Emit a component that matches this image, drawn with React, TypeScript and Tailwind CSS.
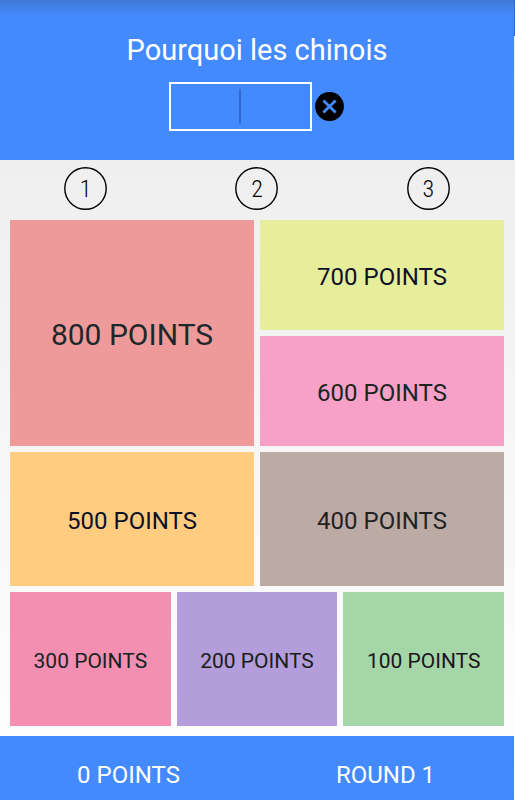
import React, { useState } from 'react';
import clsx from 'clsx';

interface Tile {
  points: number;
  className: string;
}

const tiles: Tile[] = [
  { points: 800, className: 'col-span-3 row-span-2 bg-[#ef9a9a] text-[30px] text-[#1c2829]' },
  { points: 700, className: 'col-span-3 bg-[#e6ee9c] text-2xl text-[#10102a]' },
  { points: 600, className: 'col-span-3 bg-[#f7a1c8] text-2xl text-[#1c2420]' },
  { points: 500, className: 'col-span-3 bg-[#ffcc80] text-2xl text-[#0a1028]' },
  { points: 400, className: 'col-span-3 bg-[#bcaaa4] text-2xl text-[#202224]' },
  { points: 300, className: 'col-span-2 bg-[#f48fb1] text-[21px] text-[#14241f]' },
  { points: 200, className: 'col-span-2 bg-[#b39ddb] text-[21px] text-[#1a2018]' },
  { points: 100, className: 'col-span-2 bg-[#a5d6a7] text-[21px] text-[#1c1420]' },
];

const attempts = [1, 2, 3];

const ClearIcon = () => (
  <svg viewBox="0 0 29 29" className="h-[29px] w-[29px]" aria-hidden="true">
    <circle cx="14.5" cy="14.5" r="14.4" fill="#000" />
    <path d="M8.4 8.4l12.2 12.2M20.6 8.4L8.4 20.6" stroke="#448aff" strokeWidth="2.8" fill="none" />
  </svg>
);

const Ring = () => (
  <svg viewBox="0 0 43 43" className="absolute inset-0 size-full" aria-hidden="true">
    <circle cx="21.5" cy="21.5" r="20.7" fill="none" stroke="#000" strokeWidth="1.4" />
  </svg>
);

export default function App() {
  const [answer, setAnswer] = useState('');

  return (
    <div className="relative flex min-h-screen flex-col bg-linear-to-b from-[#ebebeb] to-white pr-px font-['Roboto',sans-serif]">
      {/* Scroll mark on the right edge */}
      <span className="absolute top-0 right-0 h-9 w-px bg-[#3767bd]" />

      {/* Question and answer field */}
      <header className="flex flex-col items-center bg-[#448aff] bg-linear-to-b from-[#3f78d4] to-[#448aff] to-[16px] pt-8 pb-[29px]">
        <h1 className="text-[29px] leading-9 text-white">Pourquoi les chinois</h1>
        <form className="mt-[14px] flex items-center gap-[3px] pr-[2px]" onSubmit={(e) => e.preventDefault()}>
          <div className="relative">
            <input
              type="text"
              aria-label="Pourquoi les chinois"
              value={answer}
              onChange={(e) => setAnswer(e.target.value)}
              className="block h-[49px] w-[143px] border-2 border-white bg-transparent px-2 text-center text-2xl text-white caret-transparent outline-none"
            />
            {answer === '' && (
              <span className="pointer-events-none absolute inset-y-[7px] left-1/2 w-px -translate-x-1/2 bg-[#1f4a94]" />
            )}
          </div>
          <button type="button" aria-label="Effacer" onClick={() => setAnswer('')}>
            <ClearIcon />
          </button>
        </form>
      </header>

      <main className="flex flex-1 flex-col">
        <ol className="grid grid-cols-3 justify-items-center py-[7px]">
          {attempts.map((n) => (
            <li
              key={n}
              className="relative flex size-[43px] items-center justify-center font-['Roboto_Condensed','Roboto',sans-serif] text-2xl font-light text-black"
            >
              <Ring />
              {n}
            </li>
          ))}
        </ol>

        {/* Score board */}
        <div className="mx-[10px] mt-[3px] mb-[10px] grid flex-1 grid-cols-6 grid-rows-[110fr_110fr_134fr_134fr] gap-[6px]">
          {tiles.map((tile) => (
            <button key={tile.points} type="button" className={clsx('pt-[3px] leading-8', tile.className)}>
              {tile.points} POINTS
            </button>
          ))}
        </div>
      </main>

      <footer className="grid grid-cols-2 bg-[#448aff] pt-[23px] pb-[9px] text-center text-2xl text-white">
        <span>0 POINTS</span>
        <span>ROUND 1</span>
      </footer>
    </div>
  );
}
